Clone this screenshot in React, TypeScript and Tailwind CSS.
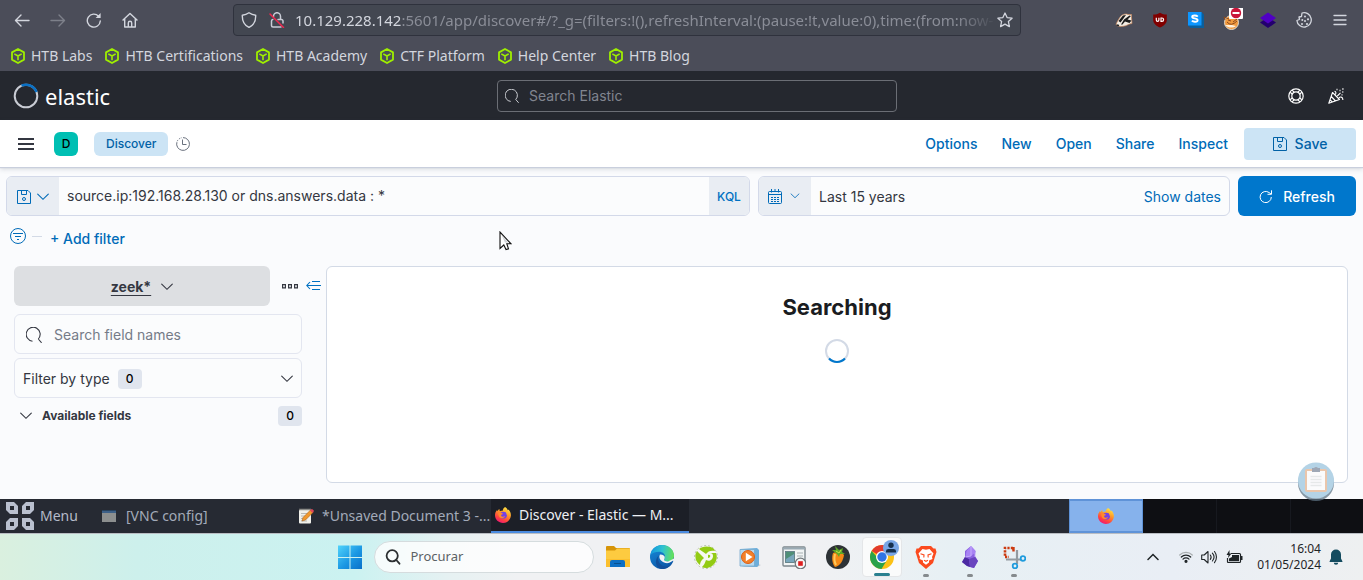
import React from "react";

type IconProps = { className?: string };

/* ---------- Browser icons ---------- */

const BackIcon = () => (
  <svg width="16" height="16" viewBox="0 0 16 16" fill="none" stroke="currentColor" strokeWidth="1.4" strokeLinecap="round" strokeLinejoin="round">
    <path d="M15 8.5H1.5M7 3L1.5 8.5L7 14" />
  </svg>
);

const ForwardIcon = () => (
  <svg width="16" height="16" viewBox="0 0 16 16" fill="none" stroke="currentColor" strokeWidth="1.4" strokeLinecap="round" strokeLinejoin="round">
    <path d="M1 8.5H14.5M9 3L14.5 8.5L9 14" />
  </svg>
);

const ReloadIcon = () => (
  <svg width="16" height="16" viewBox="0 0 16 16" fill="none" stroke="currentColor" strokeWidth="1.4" strokeLinecap="round">
    <path d="M14.3 9A6.5 6.5 0 1 1 12.6 4.2" />
    <path d="M14.6 1v5h-5z" fill="currentColor" stroke="none" />
  </svg>
);

const HomeIcon = () => (
  <svg width="16" height="16" viewBox="0 0 16 16" fill="none" stroke="currentColor" strokeWidth="1.4" strokeLinecap="round" strokeLinejoin="round">
    <path d="M1 8L8 1.5L15 8M2.7 6.8V15H13.300V6.800M6.300 15V11a1.700 1.700 0 0 1 3.400 0V15" />
  </svg>
);

const ShieldIcon = () => (
  <svg width="16" height="16" viewBox="0 0 16 16" fill="none" stroke="currentColor" strokeWidth="1.4" strokeLinejoin="round">
    <path d="M8 .8C6 2.200 3.800 3 1.300 3.200C1.100 9 3.500 13.200 8 15.400C12.500 13.200 14.900 9 14.700 3.200C12.200 3 10 2.200 8 .8Z" />
  </svg>
);

const InsecureLockIcon = () => (
  <svg width="16" height="16" viewBox="0 0 16 16" fill="none" strokeWidth="1.5" strokeLinecap="round">
    <path d="M4.500 4.500V4.200a3.500 3.500 0 0 1 7 0V7.500M9 7.500h3.500a1.500 1.500 0 0 1 1.500 1.500v2M3.800 7.500A1.500 1.500 0 0 0 2.500 9v4.500A1.500 1.500 0 0 0 4 15h8" stroke="#c9ccd6" />
    <path d="M1 2L14.500 15.500" stroke="#f0284f" strokeWidth="1.500" />
  </svg>
);

const StarIcon = () => (
  <svg width="16" height="16" viewBox="0 0 16 16" fill="none" stroke="currentColor" strokeWidth="1.300" strokeLinejoin="round">
    <path d="M8 1l2.100 4.600 5 .6-3.700 3.400 1 5L8 12.100l-4.400 2.500 1-5L.900 6.200l5-.6z" />
  </svg>
);

const CubeIcon = () => (
  <svg width="14" height="16" viewBox="0 0 14 16" fill="none" stroke="#9fef00" strokeWidth="1.800" strokeLinejoin="round">
    <path d="M7 1L13 4.400V11.600L7 15L1 11.600V4.400Z" />
    <path d="M3.300 5.900L7 8L10.700 5.900M7 8V12.300" strokeWidth="1.600" />
  </svg>
);

const BadgerIcon = () => (
  <svg width="18" height="18" viewBox="0 0 18 18">
    <path d="M1 13.500C2 11 3 9 5.500 5.500C8 3 11 2.500 13 3.500L16.500 3.500L16.500 7L17 12.500C14 12.500 12 15 8 15.300C5 15.600 2.500 15.500 1 13.500Z" fill="#f3ede4" stroke="#c9875a" strokeWidth=".7" />
    <path d="M3.500 10L8 4.500L11 4L8.500 7.500L5.500 11.500ZM9 8.500L14.500 4.500L16 5L12.500 8.500L16.500 9.500L14.500 12L10 10.500L7.500 13.500L6 13.500Z" fill="#1c1c1c" />
    <path d="M1.500 14L4 14.500" stroke="#222" strokeWidth="1.500" />
  </svg>
);

const UblockIcon = () => (
  <svg width="16" height="16" viewBox="0 0 16 16">
    <path d="M8 .8C6 2.200 3.800 2.600 1.200 2.600V8C1.200 11.500 4.500 14 8 15.500C11.500 14 14.800 11.500 14.800 8V2.600C12.200 2.600 10 2.200 8 .8Z" fill="#800000" />
    <path d="M4.300 5.800V8a1.300 1.300 0 0 0 2.600 0V5.800M9 6v3.400h.9a1.700 1.700 0 0 0 0-3.400z" fill="none" stroke="#fff" strokeWidth="1.200" />
  </svg>
);

const StylusIcon = () => (
  <svg width="16" height="16" viewBox="0 0 16 16">
    <path d="M0 0H13.500L16 2.500V16H2.500L0 13.500Z" fill="#0b5f9c" />
    <path d="M0 0H13.500V13.500H0Z" fill="#0d96ff" />
    <path d="M9.800 4.600C8.500 3.300 4.200 3 4.200 5C4.200 7 9.600 5.800 9.600 8.200C9.600 10.300 5.200 10.200 3.900 8.700" fill="none" stroke="#fff" strokeWidth="1.900" />
  </svg>
);

const BlockedProxyIcon = () => (
  <svg width="24" height="24" viewBox="0 0 24 24">
    <circle cx="11.500" cy="14.500" r="7" fill="#f19a3e" stroke="#e3d9ca" />
    <path d="M5 12l-1-3 5 2M7 14q4 5 10-1M8 12l3 1M13 14l4-3" stroke="#8d4a1c" fill="none" />
    <path d="M5 17c3 3 8 3.500 11 1l-4-1z" fill="#fff1dd" />
    <rect x="9" y="-1" width="14" height="12" rx="1" fill="#fff" />
    <circle cx="16" cy="5" r="5.200" fill="#c9153a" />
    <path d="M12.500 5h7" stroke="#fff" strokeWidth="2" />
  </svg>
);

const LayersIcon = () => (
  <svg width="16" height="16" viewBox="0 0 16 16">
    <path d="M0 10.500L8 5L16 10.500L8 16Z" fill="#23006e" />
    <path d="M0 6L8 .5L16 6L8 11.500Z" fill="#5000c4" />
  </svg>
);

const CookieIcon = () => (
  <svg width="16" height="16" viewBox="0 0 16 16" fill="none" stroke="currentColor" strokeWidth="1.300">
    <path d="M6 1A7.200 7.200 0 1 1 .9 8.500L3.500 7.500L3 5L5.500 4.500Z" strokeLinejoin="round" />
    <g fill="currentColor" stroke="none">
      <circle cx="9" cy="4.500" r="1" /><circle cx="12" cy="7.300" r="1.100" /><circle cx="6.300" cy="8" r="1" />
      <circle cx="9" cy="9" r="1" /><circle cx="6" cy="12" r="1" /><circle cx="11" cy="12" r="1.100" />
    </g>
  </svg>
);

const MenuLinesIcon = () => (
  <svg width="14" height="12" viewBox="0 0 14 12" stroke="currentColor" strokeWidth="1.300" strokeLinecap="round">
    <path d="M1 1.500H13M1 6H13M1 10.500H13" />
  </svg>
);

/* ---------- Elastic icons ---------- */

const LoadingRing = () => (
  <svg width="26" height="26" viewBox="0 0 26 26" fill="none" strokeWidth="2">
    <circle cx="13" cy="13" r="11.300" stroke="#c9ccd4" />
    <path d="M8.500 2.700A11.300 11.300 0 0 1 23.600 9" stroke="#0a70c4" strokeWidth="2.400" />
  </svg>
);

const SearchGlyph = ({ className = "" }: IconProps) => (
  <svg className={className} viewBox="0 0 16 16" fill="none" stroke="currentColor" strokeWidth="1.100">
    <path d="M12.300 12A7 7 0 1 0 6.500 14.200M12.300 12L15.600 15.800" />
  </svg>
);

const HelpRingIcon = () => (
  <svg width="16" height="16" viewBox="0 0 16 16" fill="none" stroke="currentColor" strokeWidth="1.200">
    <circle cx="8" cy="8" r="7.200" />
    <circle cx="8" cy="8" r="4.200" />
    <path d="M2.200 4.200L4.400 6.200M4.200 2.200L6.200 4.400M13.800 4.200L11.600 6.200M11.800 2.200L9.800 4.400M2.200 11.800L4.400 9.800M4.200 13.800L6.200 11.600M13.800 11.800L11.600 9.800M11.800 13.800L9.800 11.600" />
  </svg>
);

const PartyIcon = () => (
  <svg width="16" height="16" viewBox="0 0 16 16" fill="none" stroke="currentColor" strokeWidth="1.100" strokeLinejoin="round">
    <path d="M.8 15.200L4.500 4.500L11.500 11.500ZM3.300 8.500L7.500 13M2.200 12L4.300 14" />
    <path d="M7 6.500C8.500 5.500 8 3.500 6.500 3.200M9.300 8L12.500 4.800M11 10C12 8.500 14.500 8.800 14.800 11V12" />
    <path d="M8.500 1.500h1M11.500 2.500h1M14.300 1h1.200M14.300 4h1M13.500 6.800h1" strokeWidth="1.300" />
  </svg>
);

const SaveDiskIcon = () => (
  <svg width="14" height="14" viewBox="0 0 14 14" fill="none" stroke="currentColor">
    <path d="M.5.5H11L13.500 3V13.500H.5ZM4.500.500V4.500H9.500V.500" />
    <circle cx="7" cy="9" r="1.500" />
  </svg>
);

const Chevron = ({ className = "h-2 w-3" }: IconProps) => (
  <svg className={className} viewBox="0 0 12 8" fill="none" stroke="currentColor" strokeWidth="1.100" strokeLinecap="round">
    <path d="M.7 1.200L6 6.300L11.300 1.200" />
  </svg>
);

const ClockIcon = () => (
  <svg width="14" height="14" viewBox="0 0 14 14" fill="none" stroke="#69707d">
    <path d="M7 .6A6.400 6.400 0 1 1 .9 5.200" />
    <path d="M1.200 4.200A6.400 6.400 0 0 1 6 .7" strokeDasharray="1.500 1.300" />
    <path d="M6.500 2.500V7.500H10.500" />
  </svg>
);

const CalendarIcon = () => (
  <svg width="14" height="15" viewBox="0 0 14 15" fill="none" stroke="currentColor">
    <rect x=".5" y="2.500" width="13" height="12" rx="1" />
    <path d="M.5 5.500H13.500M3.500 0V3.500M7 0V2.500M10.500 0V3.500" />
    <path d="M3 8.500h2M6 8.500h2M9 8.500h2M3 10.500h2M6 10.500h2M9 10.500h2M3 12.500h2M6 12.500h2M9 12.500h2" />
  </svg>
);

const RefreshGlyph = () => (
  <svg width="14" height="14" viewBox="0 0 14 14" fill="none" stroke="currentColor">
    <path d="M12.300 7A5.600 5.600 0 1 1 10 2.500L12 4M12.500 .3V4.300H8.500" />
  </svg>
);

const FilterCircleIcon = () => (
  <svg width="16" height="16" viewBox="0 0 16 16" fill="none" stroke="currentColor">
    <circle cx="8" cy="8" r="7.500" />
    <path d="M3 5.500H13M5 8.500H11M7 11.500H9" />
  </svg>
);

const BoxesIcon = () => (
  <svg width="16" height="5" viewBox="0 0 16 5" fill="none" stroke="currentColor" strokeWidth="1.200">
    <path d="M.6.600h2.800v3.300H.6zM6.600.600h2.800v3.300H6.600zM12.600.600h2.800v3.300h-2.800z" />
  </svg>
);

const CollapseIcon = () => (
  <svg width="15" height="12" viewBox="0 0 15 12" fill="none" stroke="currentColor" strokeWidth="1.100">
    <path d="M6 1.500H14M1 5.500H15M6 9.500H14M4 2L.8 5.500L4 9" />
  </svg>
);

const ClipboardBadge = () => (
  <svg width="38" height="40" viewBox="0 0 38 40">
    <circle cx="19" cy="21" r="18" fill="#5f7484" opacity=".75" />
    <circle cx="19" cy="18.500" r="18" fill="#b4d3e6" />
    <rect x="9" y="8" width="20" height="21" rx="1" fill="#fbfbfc" stroke="#eac6ac" strokeWidth="2" />
    <path d="M15 6h2q2-2 4 0h2v4h-8z" fill="#9ea7b5" />
    <path d="M13.500 14.500h11M13.500 17.500h11M13.500 20.500h11M13.500 23.500h11" stroke="#e6e8e9" strokeWidth="1.500" />
  </svg>
);

const PointerIcon = () => (
  <svg width="13" height="20" viewBox="0 0 13 20">
    <path d="M1 1V17.500L4.800 14L7 18.600L9.500 17.800L7.800 12.800H12Z" fill="#fff" stroke="#111" strokeWidth="1.100" />
    <path d="M2.500 4L9.500 11.500H6" fill="#d2d4d8" />
  </svg>
);

/* ---------- Desktop and task bar icons ---------- */

const ParrotMenuIcon = () => (
  <svg width="28" height="28" viewBox="0 0 28 28" fill="#b9c0cf" fillRule="evenodd">
    <path d="M0 0H8L12 4V12H4L0 8ZM4 4V8H8V4Z" />
    <path d="M28 0H20L16 4V12H24L28 8ZM20 4V8H24V4Z" />
    <path d="M0 28H8L12 24V16H4L0 20ZM4 20V24H8V20Z" />
    <path d="M28 28H20L16 24V16H24L28 20ZM20 20V24H24V20Z" />
  </svg>
);

const WindowIcon = () => (
  <svg width="14" height="12" viewBox="0 0 14 12">
    <rect width="14" height="12" fill="#8c8f8f" />
    <rect width="14" height="3" fill="#3d6087" />
    <path d="M0 .5H14" stroke="#27425f" />
  </svg>
);

const NotepadIcon = () => (
  <svg className="shrink-0" width="16" height="16" viewBox="0 0 16 16">
    <rect x="1" y="1.500" width="12" height="14" rx="1" fill="#f1f0ea" />
    <path d="M1.500 1.500h11" stroke="#8d8b84" strokeWidth="2" strokeDasharray="1 1" />
    <path d="M3 5.500h8M3 8h8M3 10.500h6M3 13h6" stroke="#a9a9a6" strokeWidth=".8" />
    <path d="M4 13l1-3.500L12.500 2l2.500 2.500L7.500 12z" fill="#f0982d" stroke="#9c5512" strokeWidth=".5" />
    <path d="M12 2.500L13.500 1q1.500 0 2.500 2L14.500 5z" fill="#e0485a" />
  </svg>
);

const FirefoxIcon = () => (
  <svg className="shrink-0" width="16" height="16" viewBox="0 0 16 16">
    <defs>
      <linearGradient id="ffBody" x1=".8" y1="0" x2=".3" y2="1">
        <stop offset="0" stopColor="#fff04a" />
        <stop offset=".4" stopColor="#ff9a28" />
        <stop offset=".75" stopColor="#ff4240" />
        <stop offset="1" stopColor="#ee1577" />
      </linearGradient>
    </defs>
    <path d="M10 0C12 1 12.500 2.500 12.800 3.300C13.500 3 13.400 2.700 13.500 2.500C15 4 16 6 15.900 8.500C15.500 13 12 16 8 16C3.500 16 0 12.500 0 8.300C0 6 .8 4.500 2 3L2.300 4.300C3 3 4 2.300 4.500 2C4.300 3 4.600 3.700 5 4.200C6 3.800 7 3.800 7.500 4C7.800 2.500 8.500 1 10 0Z" fill="url(#ffBody)" />
    <circle cx="8.500" cy="8.200" r="3.400" fill="#7542e5" />
    <path d="M3 6.500C5 5 6.500 6 8 6.500C7.500 7.800 6 7.500 6 8.500C7 10.500 9 9.500 10 9C9.500 11.500 5.500 12 4 9.500Z" fill="#ff8a2c" />
    <path d="M7.500 4C10.500 3.800 12 6 11.800 8C13.500 6 12.500 3.500 10 2.500Z" fill="#ffb82e" />
  </svg>
);

const WindowsLogo = () => (
  <svg width="24" height="24" viewBox="0 0 24 24">
    <defs>
      <linearGradient id="winBlue" x1="0" y1="0" x2="1" y2="1">
        <stop offset="0" stopColor="#50d3fb" />
        <stop offset=".55" stopColor="#1a97e3" />
        <stop offset="1" stopColor="#0970c9" />
      </linearGradient>
    </defs>
    <path d="M0 .5H11.500V12H0ZM12.500.5H24V12H12.500ZM0 13H11.500V24H0ZM12.500 13H24V24H12.500Z" fill="url(#winBlue)" />
  </svg>
);

const TaskSearchIcon = () => (
  <svg width="16" height="16" viewBox="0 0 16 16" fill="none" stroke="#2b2f31" strokeWidth="1.800" strokeLinecap="round">
    <circle cx="7.200" cy="6.800" r="5.600" />
    <path d="M11.300 11L14.500 14.700" />
  </svg>
);

const FolderIcon = () => (
  <svg width="24" height="24" viewBox="0 0 24 24">
    <path d="M0 2q0-1 1-1H8L10 3H23q1 0 1 1V10H0Z" fill="#d69408" />
    <path d="M0 5.500H9L11 3.500H24V22H0Z" fill="#fdcb40" />
    <path d="M0 14H24V22H0Z" fill="#fbbf2d" />
    <path d="M4 22V17q0-2 2-2H17q2 0 2 2V22Z" fill="#0c6fc4" />
    <path d="M8 18.500h7" stroke="#07508f" />
  </svg>
);

const EdgeIcon = () => (
  <svg width="24" height="24" viewBox="0 0 24 24">
    <defs>
      <linearGradient id="edgeTop" x1="0" y1=".4" x2="1" y2=".5">
        <stop offset="0" stopColor="#1397dd" />
        <stop offset=".5" stopColor="#2fc2d0" />
        <stop offset="1" stopColor="#66e255" />
      </linearGradient>
      <linearGradient id="edgeSide" x1="0" y1="0" x2=".5" y2="1">
        <stop offset="0" stopColor="#168ddc" />
        <stop offset="1" stopColor="#0c59a9" />
      </linearGradient>
    </defs>
    <circle cx="12" cy="12" r="12" fill="url(#edgeSide)" />
    <path d="M.5 9.500C2 3.500 6.500 0 12 0C19 0 24 5 24 10.500C24 14.500 21 16.500 18 16.500C15.500 16.500 14 15.500 14 14.500C14 13.800 15 13.500 15 11.500C15 9 12.500 6.800 9 6.800C5.500 6.800 2.500 8 .5 9.500Z" fill="url(#edgeTop)" />
    <path d="M9 10.500C6.500 14.500 9.500 20.500 15 21.500C18.500 21.800 21 20 22.300 18C20 21.500 17 24 12 24C8 24 5.500 19.500 6 16C6.300 13.500 7.500 11.500 9 10.500Z" fill="#12509b" />
    <path d="M10 9.500C8 13 11 17 15.500 18C18 18.500 20.500 17.500 22.500 16C23.500 15.500 23.800 16.300 23.200 17.500C24.500 14 24 15 24 13.500L18 16.500C15.500 16.500 14 15.500 14 14.500C15.500 12.500 15 9.500 10 9.500Z" fill="#f1f3f5" />
  </svg>
);

const GreenLeafIcon = () => (
  <svg width="24" height="24" viewBox="0 0 24 24">
    <circle cx="12" cy="12" r="11.500" fill="#f6f8f1" stroke="#b9bfae" strokeDasharray="2 2" />
    <path d="M5 4C8 1 16 .5 20 4L21 6C17 5 14 6 12 9C10 7 7 6 5 4ZM1.500 9L3 6L10 13C7 15 6 18 6 20C2 17 1 13 1.500 9ZM16 8L22 8C24 13 22 18 18 21C14 23.500 11 23.500 8 22C10 20 11 18 12 15C15 17 19 15 19 11C19 9 18 8 16 8Z" fill="#93cb13" />
    <path d="M14 10C17 9 17 13 14 13Z" fill="#93cb13" />
  </svg>
);

const MediaPlayerIcon = () => (
  <svg width="24" height="24" viewBox="0 0 24 24">
    <path d="M17 18l6 2-4 2H3z" fill="#c5ced4" />
    <path d="M2 4L19 3L21 5V20L19 22L2 21Z" fill="#6daeda" />
    <path d="M2 4.500H16.500V21H2Z" fill="#b4daf2" stroke="#76a9cd" strokeWidth=".8" />
    <circle cx="10" cy="12" r="6.500" fill="#f2802a" stroke="#dc5f16" />
    <path d="M7.800 7.800L14.500 12L7.800 16.200Z" fill="#fff" />
  </svg>
);

const RecorderIcon = () => (
  <svg width="24" height="24" viewBox="0 0 24 24">
    <rect x="1" y="2" width="22" height="19" rx="1" fill="#f1f4f4" stroke="#7c878c" strokeWidth="1.400" />
    <path d="M1 3.500H23" stroke="#9aabb4" strokeWidth="2" />
    <rect x="3.500" y="6.500" width="9" height="11" fill="#4f8f77" stroke="#5a7780" strokeWidth=".8" />
    <path d="M4 14L12 9v8H4z" fill="#79a7bc" />
    <path d="M15 8h6M15 11h6" stroke="#a7b0b2" />
    <circle cx="18.500" cy="18.500" r="5.300" fill="#f6f6f6" stroke="#70777a" strokeWidth="1.200" />
    <rect x="16.200" y="16.200" width="4.600" height="4.600" fill="#dc2020" />
  </svg>
);

const FruitIcon = () => (
  <svg width="24" height="24" viewBox="0 0 24 24">
    <circle cx="12" cy="12" r="12" fill="#2d3235" />
    <path d="M7 8C11 6 16 7 18 10C17 16 14 21 9 22C6 19 5.500 12 7 8Z" fill="#f58a16" />
    <path d="M9 9C8 13 8.500 17 10 20" stroke="#ffc95b" strokeWidth="2" fill="none" />
    <path d="M11 9L6 5L10 5L9 1L13 5L17 3L16 7L19 9L14 9L13 12Z" fill="#5da827" />
    <path d="M10 6L13 8L15 5" stroke="#bfe24a" fill="none" />
  </svg>
);

const ChromeIcon = () => (
  <svg width="30" height="30" viewBox="0 0 30 30">
    <circle cx="13" cy="17" r="12" fill="#fbc116" />
    <path d="M13 17L2.600 11A12 12 0 0 1 23.400 11Z" fill="#e33b2e" />
    <path d="M13 17H8L2.600 11A12 12 0 0 0 12.500 29L18 20Z" fill="#2aa24b" />
    <circle cx="13" cy="17" r="6" fill="#fff" />
    <circle cx="13" cy="17" r="4.700" fill="#2f74e6" />
    <circle cx="22" cy="8" r="8" fill="#79a6e6" />
    <circle cx="22" cy="5.300" r="2.700" fill="#16304e" />
    <path d="M17 12.500V11Q17 9 19.500 9H24.500Q27 9 27 11V12.500Z" fill="#16304e" />
  </svg>
);

const BraveIcon = () => (
  <svg width="22" height="24" viewBox="0 0 22 24">
    <path d="M6 1H16L18.500 3.500L20.500 3.500L21.500 7L20.500 10L18 18L11 24L4 18L1.500 10L.5 7L1.500 3.500H3.500Z" fill="#fb4a1e" />
    <path d="M7.500 4L11 4.800L14.500 4L18.500 8.500L17 12L17.500 14L14 15.500L14 17.500L11 19.800L8 17.500L8 15.500L4.500 14L5 12L3.500 8.500Z" fill="#fff" />
    <path d="M5.500 8.800L9 10L8.800 12.500M16.500 8.800L13 10L13.200 12.500M9 15.300L11 16.300L13 15.300" fill="none" stroke="#fb4a1e" strokeWidth="1.100" />
  </svg>
);

const ObsidianIcon = () => (
  <svg width="18" height="24" viewBox="0 0 18 24">
    <path d="M10 1L14.500 6L14 11L17 16L13 23L6 21L1 17L4 12V6Z" fill="#8a62e0" />
    <path d="M10 1L5.500 6L4.500 12L10 11L14 8L14.500 6Z" fill="#a883f4" />
    <path d="M1 17L4 12L8 14L9 22L6 21Z" fill="#4b2aa2" />
    <path d="M9 22L8 14L14 12L17 16L13 23Z" fill="#6a45bf" />
    <path d="M10 1L10 11L4.500 12M14 8L14 12" stroke="#cdb6ff" strokeWidth=".8" fill="none" />
  </svg>
);

const SnipIcon = () => (
  <svg width="24" height="24" viewBox="0 0 24 24" fill="none">
    <path d="M11 3H3V12H7" stroke="#cc3a10" strokeWidth="2.600" strokeDasharray="2.200 1.200" />
    <path d="M15 5V19M4 14.500H19" stroke="#939aa0" strokeWidth="2.200" />
    <circle cx="13" cy="21" r="2.300" stroke="#1e9bdd" strokeWidth="1.800" />
    <circle cx="21" cy="13.500" r="2.300" stroke="#1e9bdd" strokeWidth="1.800" />
    <path d="M10 3.300H11.500V6.500" stroke="#cc3a10" strokeWidth="2.400" />
  </svg>
);

const WifiIcon = () => (
  <svg width="14" height="12" viewBox="0 0 14 12" fill="none" stroke="#1f2427" strokeWidth="1.200" strokeLinecap="round">
    <path d="M.7 4A9 9 0 0 1 13.300 4" stroke="#a9aeb0" />
    <path d="M2.300 6A6.600 6.600 0 0 1 11.700 6M4 8.100A4.200 4.200 0 0 1 10 8.100" />
    <circle cx="7" cy="10.300" r="1" fill="#1f2427" />
  </svg>
);

const VolumeIcon = () => (
  <svg width="17" height="14" viewBox="0 0 17 14" fill="none" stroke="#1f2427" strokeWidth="1.100" strokeLinecap="round" strokeLinejoin="round">
    <path d="M.7 5V9.500H3.200L7 13V1.500L3.200 5ZM9.300 5A3.500 3.500 0 0 1 9.300 9.300M11.400 3.200A6 6 0 0 1 11.400 11M13.500 1.500A9 9 0 0 1 13.500 12.700" />
  </svg>
);

const BatteryIcon = () => (
  <svg width="17" height="14" viewBox="0 0 17 14">
    <path d="M5 3.500H13.500Q14.500 3.500 14.500 4.500V11.500Q14.500 12.500 13.500 12.500H2.500Q1.500 12.500 1.500 11.500V8" fill="none" stroke="#1f2427" strokeWidth="1.200" />
    <path d="M6 5H13V11.200H3V8.500L6 7ZM15 6H16.500V10H15Z" fill="#1f2427" />
    <path d="M3.500 0L.5 5H2.500L2 8L5.500 3.500H3.500Z" fill="#1f2427" />
  </svg>
);

const BellIcon = () => (
  <svg width="14" height="16" viewBox="0 0 14 16" fill="#134b5f">
    <path d="M7 .5A5 5 0 0 0 2 5.500V9.500L.6 12.200V13H13.400V12.200L12 9.500V5.500A5 5 0 0 0 7 .5ZM4.800 13.800a2.200 2 0 0 0 4.400 0z" />
  </svg>
);

/* ---------- Data ---------- */

const bookmarks = ["HTB Labs", "HTB Certifications", "HTB Academy", "CTF Platform", "Help Center", "HTB Blog"];

const extensions = [
  { name: "Privacy Badger", icon: <BadgerIcon /> },
  { name: "uBlock", icon: <UblockIcon /> },
  { name: "Stylus", icon: <StylusIcon /> },
  { name: "Proxy", icon: <BlockedProxyIcon /> },
  { name: "Layers", icon: <LayersIcon /> },
  { name: "Cookies", icon: <CookieIcon /> },
  { name: "Application menu", icon: <MenuLinesIcon /> },
];

const pinnedApps = [
  { name: "Explorer", icon: <FolderIcon />, running: false },
  { name: "Edge", icon: <EdgeIcon />, running: false },
  { name: "Leaf", icon: <GreenLeafIcon />, running: false },
  { name: "Media Player", icon: <MediaPlayerIcon />, running: false },
  { name: "Recorder", icon: <RecorderIcon />, running: false },
  { name: "Studio", icon: <FruitIcon />, running: false },
  { name: "Chrome", icon: <ChromeIcon />, running: true, active: true },
  { name: "Brave", icon: <BraveIcon />, running: true },
  { name: "Obsidian", icon: <ObsidianIcon />, running: true },
  { name: "Snipping Tool", icon: <SnipIcon />, running: true },
];

/* ---------- Sections ---------- */

function BrowserChrome() {
  return (
    <div className="bg-[#4b4d59] font-['Noto_Sans',sans-serif] text-[#d3d6de]">
      <div className="flex h-10 items-center pr-[11px] pl-2.5">
        <div className="flex gap-3">
          <button aria-label="Back" className="flex size-6 items-center justify-center"><BackIcon /></button>
          <button aria-label="Forward" className="flex size-6 items-center justify-center text-[#7d808a]"><ForwardIcon /></button>
          <button aria-label="Reload" className="flex size-6 items-center justify-center"><ReloadIcon /></button>
          <button aria-label="Home" className="flex size-6 items-center justify-center"><HomeIcon /></button>
        </div>
        <div className="mr-[91px] ml-[91px] flex h-8 min-w-0 flex-1 items-center rounded border border-[#2f323d] bg-[#434751] px-[7px]">
          <ShieldIcon />
          <span className="mr-2.5 ml-3"><InsecureLockIcon /></span>
          <div className="min-w-0 flex-1 overflow-hidden text-[15px] whitespace-nowrap text-[#8a8d97] [mask-image:linear-gradient(to_left,transparent,black_40px)]">
            <span className="text-[#d3d6de]">10.129.228.142</span>:5601/app/discover#/?_g=(filters:!(),refreshInterval:(pause:!t,value:0),time:(from:now-
          </div>
          <button aria-label="Bookmark this page"><StarIcon /></button>
        </div>
        <div className="flex gap-3">
          {extensions.map((e) => (
            <button key={e.name} aria-label={e.name} className="flex size-6 items-center justify-center">{e.icon}</button>
          ))}
        </div>
      </div>
      <nav className="flex h-[31px] items-center gap-[13px] pl-[11px] text-sm">
        {bookmarks.map((b) => (
          <a key={b} href="#" className="flex items-center gap-1.5 whitespace-nowrap">
            <CubeIcon />
            {b}
          </a>
        ))}
      </nav>
    </div>
  );
}

function ElasticHeader() {
  return (
    <header className="flex h-[49px] items-center justify-between bg-[#25282f] pr-[15px] pl-[13px]">
      <a href="#" className="flex items-center gap-1.5 text-white">
        <LoadingRing />
        <span className="font-['Noto_Sans',sans-serif] text-[22px] leading-8">elastic</span>
      </a>
      <label className="flex h-8 w-[400px] items-center gap-2.5 rounded border border-[#6b6e75] px-[7px]">
        <SearchGlyph className="size-3.5 text-[#cfd1d6]" />
        <input aria-label="Search Elastic" placeholder="Search Elastic" className="min-w-0 flex-1 bg-transparent text-sm text-white outline-none placeholder:text-[#81858f]" />
      </label>
      <div className="flex items-center gap-6 px-1 text-white">
        <button aria-label="Help"><HelpRingIcon /></button>
        <button aria-label="Newsfeed"><PartyIcon /></button>
      </div>
    </header>
  );
}

function AppNav() {
  return (
    <div className="relative flex h-[47px] items-center bg-white pr-[7px] pl-[18px] shadow-[0_1px_1px_#c9cfdd,0_2px_5px_rgba(60,70,90,0.2)]">
      <button aria-label="Toggle navigation" className="flex w-4 flex-col gap-[3px]">
        <span className="h-0.5 bg-[#343741]" />
        <span className="h-0.5 bg-[#343741]" />
        <span className="h-0.5 bg-[#343741]" />
      </button>
      <span className="ml-5 flex size-6 items-center justify-center rounded-md bg-[#00bfb3] text-xs font-medium text-black">D</span>
      <a href="#" className="mr-2 ml-4 rounded-md bg-[#cce4f5] px-3 text-xs leading-6 font-medium text-[#0061a6]">Discover</a>
      <ClockIcon />
      <nav className="ml-auto flex items-center gap-6 text-sm font-medium text-[#006bb8]">
        {["Options", "New", "Open", "Share", "Inspect"].map((l) => (
          <a key={l} href="#">{l}</a>
        ))}
      </nav>
      <button className="ml-4 flex h-8 w-28 items-center justify-center gap-2 rounded bg-[#cce4f5] text-sm font-medium text-[#0061a6]">
        <SaveDiskIcon />
        Save
      </button>
    </div>
  );
}

function QueryBar() {
  return (
    <div className="flex gap-2 pt-[9px] pr-[7px] pl-1.5 text-sm">
      <div className="flex h-10 min-w-0 flex-1 overflow-hidden rounded-md border border-[#d3d9e9] bg-[#fbfcfd]">
        <button aria-label="Saved queries" className="flex w-13 items-center justify-center gap-1.5 bg-[#e9edf3] pt-0.5 text-[#006bb8]">
          <SaveDiskIcon />
          <Chevron />
        </button>
        <input aria-label="Query" defaultValue="source.ip:192.168.28.130 or dns.answers.data : *" className="min-w-0 flex-1 px-2 text-[#343741] outline-none" />
        <button className="w-10 bg-[#e9edf3] pt-0.5 text-xs font-medium text-[#0071c2]">KQL</button>
      </div>
      <div className="flex h-10 w-[472px] overflow-hidden rounded-md border border-[#d3d9e9] bg-[#fbfcfd]">
        <button aria-label="Quick dates" className="flex w-13 items-center gap-2 bg-[#e9edf3] pl-[9px] text-[#006bb8]">
          <CalendarIcon />
          <Chevron className="h-1.5 w-2.5" />
        </button>
        <button className="flex flex-1 items-center justify-between px-2 pt-0.5">
          <span className="text-[#343741]">Last 15 years</span>
          <span className="text-[#006bb8]">Show dates</span>
        </button>
      </div>
      <button className="flex h-10 w-[118px] items-center justify-center gap-2.5 rounded-md bg-[#0077cc] pt-0.5 font-medium text-white">
        <RefreshGlyph />
        Refresh
      </button>
    </div>
  );
}

function FilterRow() {
  return (
    <div className="flex h-[50px] items-center pb-1 pl-2.5 text-sm font-medium text-[#006bb8]">
      <div className="flex items-center pr-2 pb-1.5">
        <button aria-label="Filter options"><FilterCircleIcon /></button>
        <span className="ml-1.5 h-px w-2.5 bg-[#d3dae6]" />
      </div>
      <button className="leading-5">+ Add filter</button>
    </div>
  );
}

const Count = ({ value }: { value: number }) => (
  <span className="w-6 rounded-sm bg-[#e0e5ee] text-center text-xs leading-5 font-medium text-black">{value}</span>
);

function Sidebar() {
  return (
    <aside className="w-[308px] shrink-0 text-sm text-[#343741]">
      <div className="flex items-center">
        <button className="flex h-10 w-64 items-center justify-center gap-2.5 rounded-md bg-[#dddfe2] pt-0.5 font-bold">
          <span className="underline underline-offset-3">zeek*</span>
          <Chevron />
        </button>
        <button aria-label="Index pattern actions" className="ml-3"><BoxesIcon /></button>
        <button aria-label="Collapse sidebar" className="ml-2 text-[#0071c2]"><CollapseIcon /></button>
      </div>
      <div className="mt-2 flex w-72 flex-col gap-1">
        <label className="flex h-10 items-center gap-3 rounded-md border border-[#e3e6f0] bg-[#fbfcfd] px-[11px] pt-0.5">
          <SearchGlyph className="size-4" />
          <input aria-label="Search field names" placeholder="Search field names" className="min-w-0 flex-1 outline-none placeholder:text-[#757b88]" />
        </label>
        <button className="flex h-10 items-center gap-2 rounded-md border border-[#e3e6f0] bg-[#fbfcfd] px-2 pt-0.5">
          Filter by type
          <Count value={0} />
          <Chevron className="ml-auto h-2 w-3" />
        </button>
        <button className="mt-1 flex items-center gap-2.5 pl-1.5 text-xs leading-5 font-bold">
          <Chevron />
          <span className="flex-1 text-left">Available fields</span>
          <Count value={0} />
        </button>
      </div>
    </aside>
  );
}

function Results() {
  return (
    <main className="relative flex flex-1 flex-col items-center gap-[17px] rounded-md border border-[#d3dae6] bg-white pt-[25px]">
      <h2 className="text-[22px] leading-[30px] font-bold text-[#1a1c21]">Searching</h2>
      <svg width="24" height="24" viewBox="0 0 24 24" fill="none" strokeWidth="2">
        <circle cx="12" cy="12" r="11" stroke="#d3dae6" />
        <path d="M20 19.500A11 11 0 0 1 4 19.500" stroke="#0077cc" />
      </svg>
      <div className="absolute right-3 -bottom-5 z-10"><ClipboardBadge /></div>
      <div className="absolute -top-9 left-[172px]"><PointerIcon /></div>
    </main>
  );
}

function DesktopPanel() {
  return (
    <div className="flex h-[34px] bg-[#262a33] font-['Noto_Sans',sans-serif] text-sm whitespace-nowrap text-[#b5bbc9]">
      <button className="flex w-[95px] items-center gap-1.5 pl-1.5"><ParrotMenuIcon />Menu</button>
      <button className="flex w-[198px] items-center gap-2.5 px-[7px] text-[#a3aab9]"><WindowIcon /><span>[VNC config]</span></button>
      <button className="flex w-[198px] items-center gap-2 pl-[5px] text-[#a3aab9]"><NotepadIcon /><span>*Unsaved Document 3 -...</span></button>
      <button className="flex w-[198px] items-center gap-2 border-b-2 border-[#4a8be0] bg-[#1c1f27] pl-1 text-[#eef0f4]"><FirefoxIcon /><span>Discover - Elastic — M...</span></button>
      <div className="ml-auto grid w-[294px] grid-cols-4 bg-[#0e0f13]">
        <button aria-label="Workspace 1" className="flex items-center justify-center border border-y-2 border-[#5f93d8] bg-[#86b2ec]"><FirefoxIcon /></button>
        <button aria-label="Workspace 2" />
        <button aria-label="Workspace 3" className="border-l border-[#17191f]" />
        <button aria-label="Workspace 4" className="border-l border-[#17191f]" />
      </div>
    </div>
  );
}

function WindowsTaskbar() {
  return (
    <footer className="grid h-[47px] grid-cols-[1fr_auto_1fr] items-center border-t border-[#b9bdc3] bg-[linear-gradient(90deg,#daf0df_0%,#cdf0ec_10%,#cbf2f1_26%,#e6f1f2_33%,#f0f1f3_38%,#f0f1f3_60%,#e7f0f4_70%,#e9eef5_86%,#eef0f1_100%)] font-['Noto_Sans',sans-serif]">
      <div />
      <div className="flex items-center gap-1">
        <button aria-label="Start" className="flex size-10 items-center justify-center"><WindowsLogo /></button>
        <label className="flex h-8 w-[220px] items-center gap-2.5 rounded-full border border-[#d5dcde] bg-white/80 px-2.5">
          <TaskSearchIcon />
          <input aria-label="Procurar" placeholder="Procurar" className="min-w-0 flex-1 text-[13px] outline-none placeholder:text-[#5c6266]" />
        </label>
        {pinnedApps.map((a) => (
          <button
            key={a.name}
            aria-label={a.name}
            className={
              a.active
                ? "relative flex size-10 items-center justify-center rounded border border-[#e4e6e8] bg-[#fafbfb] pb-1 pl-1"
                : "relative flex size-10 items-center justify-center"
            }
          >
            {a.icon}
            {a.running && (
              <span className={a.active ? "absolute bottom-0 left-[11px] h-[3px] w-4 rounded-full bg-[#2a8090]" : "absolute bottom-0 left-[17px] h-[3px] w-1.5 rounded-full bg-[#858a8d]"} />
            )}
          </button>
        ))}
      </div>
      <div className="flex items-center justify-end gap-2 pr-5 text-[#1f2427]">
        <button aria-label="Hidden icons" className="mr-3">
          <svg width="12" height="8" viewBox="0 0 12 8" fill="none" stroke="currentColor" strokeWidth="1.500" strokeLinecap="round"><path d="M1 6.500L6 1.500L11 6.500" /></svg>
        </button>
        <WifiIcon />
        <VolumeIcon />
        <BatteryIcon />
        <div className="ml-1.5 text-right text-xs leading-4">
          <div>16:04</div>
          <div>01/05/2024</div>
        </div>
        <BellIcon />
      </div>
    </footer>
  );
}

export default function App() {
  return (
    <div className="flex min-h-screen flex-col bg-[#fafbfd] font-['Inter',sans-serif]">
      <BrowserChrome />
      <ElasticHeader />
      <AppNav />
      <QueryBar />
      <FilterRow />
      <div className="flex flex-1 gap-1 pr-[15px] pb-4 pl-3.5">
        <Sidebar />
        <Results />
      </div>
      <DesktopPanel />
      <WindowsTaskbar />
    </div>
  );
}
